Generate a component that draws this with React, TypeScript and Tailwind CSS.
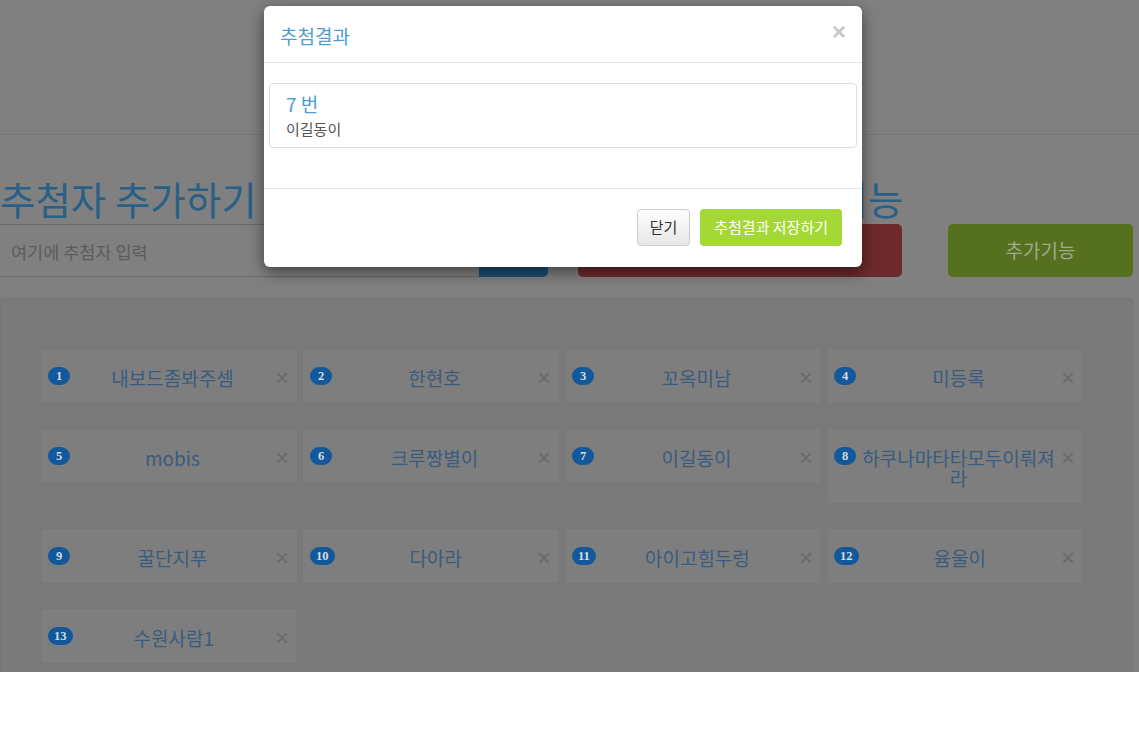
const entries = [
  { no: 1, name: "내보드좀봐주셈" },
  { no: 2, name: "한현호" },
  { no: 3, name: "꼬옥미남" },
  { no: 4, name: "미등록" },
  { no: 5, name: "mobis" },
  { no: 6, name: "크루짱별이" },
  { no: 7, name: "이길동이" },
  { no: 8, name: "하쿠나마타타모두이뤄져라" },
  { no: 9, name: "꿀단지푸" },
  { no: 10, name: "다아라" },
  { no: 11, name: "아이고힘두렁" },
  { no: 12, name: "윰울이" },
  { no: 13, name: "수원사람1" },
];

function EntryCard({ no, name }: { no: number; name: string }) {
  return (
    <div className="flex items-start border border-[#787878] bg-[#7e7e7e] pb-[15px] pl-[7px] pr-[8px] pt-[19px]">
      <span className="-mt-[1px] flex h-[18px] min-w-[22px] items-center justify-center rounded-full bg-[#11599a] px-[6px] font-['Liberation_Serif',serif] text-[12.5px] font-bold leading-none text-[#d6dce3]">
        {no}
      </span>
      <span className="flex-1 break-all px-[2px] text-center text-[19px] leading-[20px] text-[#395c7e]">
        {name}
      </span>
      <span className="font-['Liberation_Sans',sans-serif] text-[24px] leading-[20px] text-[#6a6a6a]">
        ×
      </span>
    </div>
  );
}

export default function App() {
  return (
    <div className="min-h-[743px] bg-white font-['Noto_Sans_CJK_KR','Noto_Sans',sans-serif]">
      <div className="relative h-[672px] overflow-hidden bg-[#808080]">
        <div className="h-[135px] border-b border-[#777]" />

        <div className="mt-[43px] flex h-[40px] items-center whitespace-nowrap text-[38.5px] leading-[40px] text-[#2a5f86]">
          <h1 className="w-[576px]">추첨자 추가하기</h1>
          <h1>추첨하기와 추가기능</h1>
        </div>

        <div className="mt-[6px] flex h-[53px]">
          <div className="flex w-[479px] items-center border-y border-[#6a6a6a] pl-[11px] pt-[4px] text-[17.5px] text-[#5c5c5c]">
            여기에 추첨자 입력
          </div>
          <div className="w-[69px] rounded-r-[5px] bg-[#1b4f77]" />
          <div className="ml-[30px] w-[324px] rounded-[5px] bg-[#6d2a2c]" />
          <div className="ml-[46px] flex w-[185px] items-center justify-center rounded-[5px] bg-[#55701e] text-[19px] text-[#a0aa8e]">
            추가기능
          </div>
        </div>

        <div className="mt-[21px] h-[400px] w-[1133px] rounded-[4px] border border-[#767676] bg-[#7a7a7a] pl-[39px] pt-[49px]">
          <div className="grid grid-cols-[repeat(4,258px)] items-start gap-x-[4px] gap-y-[24px]">
            {entries.map((e) => (
              <EntryCard key={e.no} no={e.no} name={e.name} />
            ))}
          </div>
        </div>

        <div className="absolute left-[264px] top-[6px] w-[598px] rounded-[6px] bg-white shadow-[0_5px_15px_rgba(0,0,0,0.5)]">
          <div className="flex h-[57px] items-center justify-between border-b border-[#e5e5e5] pl-[16px] pr-[16px] pt-[4px]">
            <span className="text-[19px] text-[#4e9dd3]">추첨결과</span>
            <span className="-mt-[8px] font-['Liberation_Sans',sans-serif] text-[24px] font-bold text-[#c8c8c8]">
              ×
            </span>
          </div>
          <div className="px-[5px] pb-[20px] pt-[20px]">
            <div className="mb-[20px] rounded-[4px] border border-[#dddddd] px-[16px] pb-[8px] pt-[10px]">
              <div className="mb-[5px] text-[19px] leading-[20px] text-[#4e9dd3]">7 번</div>
              <div className="text-[15px] leading-[20px] text-[#555]">이길동이</div>
            </div>
          </div>
          <div className="flex justify-end gap-[10px] border-t border-[#e5e5e5] px-[20px] pb-[21px] pt-[20px]">
            <button className="h-[37px] rounded-[4px] border border-[#cccccc] bg-gradient-to-b from-white to-[#e6e6e6] px-[12px] text-[15px] text-[#333]">
              닫기
            </button>
            <button className="h-[37px] rounded-[4px] bg-[#a4d837] px-[14px] text-[15px] text-white">
              추첨결과 저장하기
            </button>
          </div>
        </div>
      </div>
    </div>
  );
}
